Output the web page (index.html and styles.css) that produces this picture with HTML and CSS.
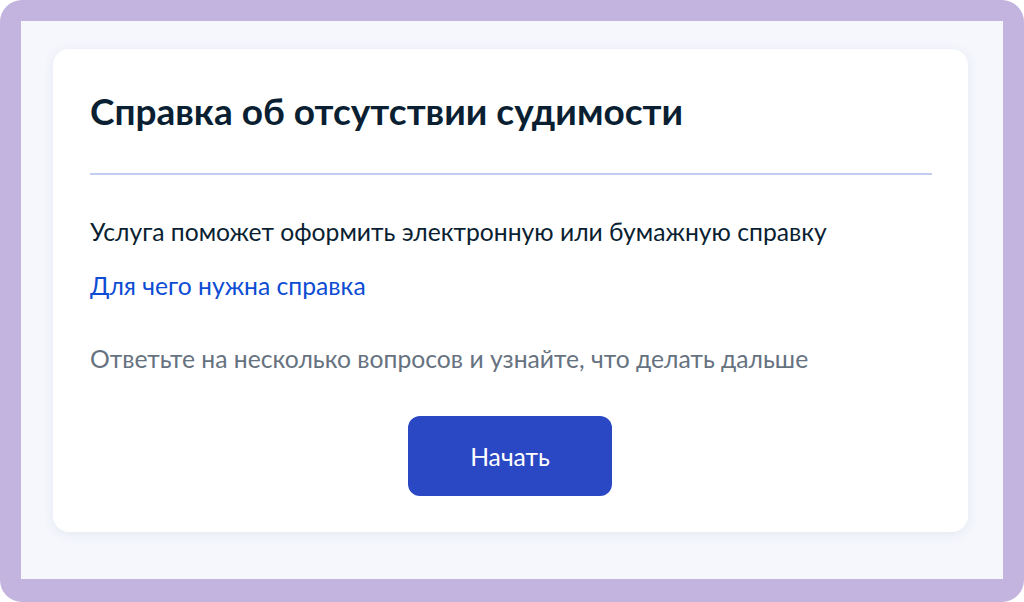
FILE: index.html
```html
<!DOCTYPE html>
<html lang="ru">
<head>
<meta charset="utf-8">
<link rel="stylesheet" href="styles.css">
</head>
<body>
<div class="frame">
  <div class="stage">
    <div class="card">
      <h1 class="title">Справка об отсутствии судимости</h1>
      <div class="divider"></div>
      <p class="lead">Услуга поможет оформить электронную или бумажную справку</p>
      <a class="link" href="#">Для чего нужна справка</a>
      <p class="hint">Ответьте на несколько вопросов и узнайте, что делать дальше</p>
      <div class="actions">
        <button class="btn">Начать</button>
      </div>
    </div>
  </div>
</div>
</body>
</html>
```
FILE: styles.css
```css
html, body {
  margin: 0;
  padding: 0;
  background: #ffffff;
}
body {
  width: 1024px;
  height: 602px;
  font-family: Lato, "Noto Sans", sans-serif;
}
.frame {
  box-sizing: border-box;
  width: 1024px;
  height: 602px;
  background: #c3b4df;
  border-radius: 22px;
  padding: 21px 21px 23px 21px;
}
.stage {
  box-sizing: border-box;
  height: 100%;
  background: #f5f7fc;
  padding: 28px 35px 0 32px;
}
.card {
  box-sizing: border-box;
  height: 483px;
  background: #ffffff;
  border-radius: 16px;
  box-shadow: 0 2px 12px rgba(40, 60, 120, 0.08);
  padding: 38px 36px 0 37px;
}
.title {
  margin: 0;
  font-size: 37px;
  line-height: 48px;
  font-weight: 700;
  color: #0b1f33;
}
.divider {
  height: 2px;
  background: #c3cdf0;
  margin-top: 38px;
}
.lead {
  margin: 42px 0 0;
  font-size: 24.7px;
  line-height: 30px;
  color: #0b1f33;
}
.link {
  display: inline-block;
  margin-top: 24px;
  font-size: 24.7px;
  line-height: 30px;
  color: #0d4cd3;
  text-decoration: none;
}
.hint {
  margin: 43px 0 0;
  font-size: 24.7px;
  line-height: 30px;
  color: #66727f;
}
.actions {
  display: flex;
  justify-content: center;
  margin-top: 42px;
  margin-right: 2px;
}
.btn {
  width: 204px;
  height: 80px;
  border: none;
  border-radius: 12px;
  background: #2a47c4;
  color: #ffffff;
  font-family: Lato, "Noto Sans", sans-serif;
  font-size: 24.7px;
}
```
